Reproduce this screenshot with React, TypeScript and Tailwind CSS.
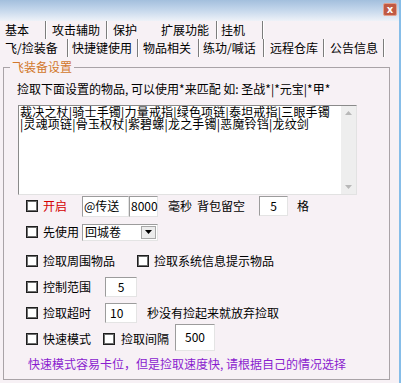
import React from "react";

const Cb = ({ className = "" }: { className?: string }) => (
  <span
    className={`block w-[12px] h-[12px] shrink-0 bg-white border border-[#1e1e1e] shadow-[inset_0_0_0_1px_#6e6e6e] ${className}`}
  />
);

const Sep = () => (
  <span className="block h-full w-[2px] shrink-0 border-l border-[#7c7c7c] border-r border-r-white" />
);

const Tab = ({ w, pl, children }: { w: string; pl: string; children: React.ReactNode }) => (
  <div className={`h-full flex items-center shrink-0 whitespace-nowrap ${w} ${pl}`}>{children}</div>
);

export default function App() {
  return (
    <div className="w-[401px] h-[383px] overflow-hidden bg-[#f7f1f5] border-r-2 border-[#86bde8] text-[12px] leading-[14px] text-black font-['Noto_Sans_CJK_SC','Noto_Sans',sans-serif]">
      {/* title bar */}
      <div className="h-[21px] flex justify-end items-start pr-[2px] bg-gradient-to-b from-[#a3bfdd] via-[#c6d8ec] to-[#eef2f8]">
        <div className="mt-[3px] w-[14px] h-[13px] rounded-[2px] bg-[#c05a44] border border-[#e3a08e] flex items-center justify-center text-white text-[10px] leading-[10px] font-bold font-['DejaVu_Sans',sans-serif]">
          x
        </div>
      </div>

      {/* tab row 1 */}
      <div className="h-[18px] flex items-stretch">
        <Tab w="w-[45px]" pl="pl-[5px]">基本</Tab>
        <Sep />
        <Tab w="w-[59px]" pl="pl-[5px]">攻击辅助</Tab>
        <Sep />
        <Tab w="w-[48px]" pl="pl-[5px]">保护</Tab>
        <Tab w="w-[60px]" pl="pl-[5px]">扩展功能</Tab>
        <Sep />
        <Tab w="w-[44px]" pl="pl-[3px]">挂机</Tab>
        <Sep />
      </div>

      {/* tab row 2 */}
      <div className="h-[18px] flex items-stretch">
        <Tab w="w-[67px]" pl="pl-[5px]">飞/捡装备</Tab>
        <Sep />
        <Tab w="w-[68px]" pl="pl-[3px]">快捷键使用</Tab>
        <Sep />
        <Tab w="w-[59px]" pl="pl-[4px]">物品相关</Tab>
        <Sep />
        <Tab w="w-[63px]" pl="pl-[3px]">练功/喊话</Tab>
        <Sep />
        <Tab w="w-[58px]" pl="pl-[5px]">远程仓库</Tab>
        <Sep />
        <Tab w="w-[58px]" pl="pl-[5px]">公告信息</Tab>
        <Sep />
      </div>

      {/* group box */}
      <fieldset className="mt-[3px] ml-[3px] w-[387px] h-[320px] border border-[#a9a3a7]">
        <legend className="ml-[6px] px-[2px] text-[#d2782c] leading-[14px]">飞装备设置</legend>

        <div className="mt-[8px] pl-[13px] whitespace-nowrap">
          捡取下面设置的物品, 可以使用*来匹配 如: 圣战*|*元宝|*甲*
        </div>

        {/* textarea */}
        <div className="mt-[9px] ml-[14px] w-[339px] h-[90px] flex bg-white border border-[#8a8a8a] border-b-[#e2e2e2] border-r-[#e2e2e2]">
          <div className="flex-1 pl-[1px] leading-[12px] whitespace-nowrap tracking-[0.2px]">
            <div>裁决之杖|骑士手镯|力量戒指|绿色项链|泰坦戒指|三眼手镯</div>
            <div>|灵魂项链|骨玉权杖|紫碧螺|龙之手镯|恶魔铃铛|龙纹剑</div>
          </div>
          <div className="w-[15px] h-full shrink-0 bg-[#eeeeee] flex flex-col justify-between items-center py-[5px]">
            <svg width="7" height="4" viewBox="0 0 7 4">
              <polygon points="0,4 7,4 3.5,0" fill="#b8b8b8" />
            </svg>
            <svg width="7" height="4" viewBox="0 0 7 4">
              <polygon points="0,0 7,0 3.5,4" fill="#b8b8b8" />
            </svg>
          </div>
        </div>

        {/* row 1 */}
        <div className="h-[22px] flex items-center pl-[22px] whitespace-nowrap">
          <Cb />
          <span className="ml-[5px] text-[#d40000]">开启</span>
          <div className="ml-[15px] flex">
            <div className="w-[47px] h-[21px] bg-white border border-[#9c9c9c] border-b-[#e4e4e4] border-r-[#e4e4e4] flex items-center pl-[1px]">
              @传送
            </div>
            <div className="w-[29px] h-[21px] bg-white border border-[#9c9c9c] border-b-[#e4e4e4] border-r-[#e4e4e4] flex items-center pl-[1px]">
              8000
            </div>
          </div>
          <span className="ml-[10px]">毫秒</span>
          <span className="ml-[5px]">背包留空</span>
          <div className="ml-[14px] w-[29px] h-[20px] bg-white border border-[#9c9c9c] border-b-[#e4e4e4] border-r-[#e4e4e4] flex items-center justify-center">
            5
          </div>
          <span className="ml-[9px]">格</span>
        </div>

        {/* row 2 */}
        <div className="mt-[3px] h-[24px] flex items-center pl-[22px] whitespace-nowrap">
          <Cb />
          <span className="ml-[5px]">先使用</span>
          <div className="ml-[3px] w-[76px] h-[17px] bg-white border border-[#9c9c9c] border-b-[#e4e4e4] border-r-[#e4e4e4] flex items-center justify-between">
            <span className="pl-[2px]">回城卷</span>
            <div className="mr-[1px] w-[15px] h-[13px] bg-[#ececec] border border-[#a8a8a8] flex items-center justify-center">
              <svg width="7" height="4" viewBox="0 0 7 4">
                <polygon points="0,0 7,0 3.5,4" fill="#000" />
              </svg>
            </div>
          </div>
        </div>

        {/* row 3 */}
        <div className="mt-[5px] h-[24px] flex items-center pl-[22px] whitespace-nowrap">
          <Cb />
          <span className="ml-[5px]">捡取周围物品</span>
          <Cb className="ml-[22px]" />
          <span className="ml-[5px]">捡取系统信息提示物品</span>
        </div>

        {/* row 4 */}
        <div className="mt-[4px] h-[20px] flex items-center pl-[22px] whitespace-nowrap">
          <Cb />
          <span className="ml-[5px]">控制范围</span>
          <div className="ml-[14px] w-[32px] h-[20px] bg-white border border-[#9c9c9c] border-b-[#e4e4e4] border-r-[#e4e4e4] flex items-center justify-center">
            5
          </div>
        </div>

        {/* row 5 */}
        <div className="mt-[5px] h-[21px] flex items-center pl-[22px] whitespace-nowrap">
          <Cb />
          <span className="ml-[5px]">捡取超时</span>
          <div className="ml-[14px] w-[32px] h-[20px] bg-white border border-[#9c9c9c] border-b-[#e4e4e4] border-r-[#e4e4e4] flex items-center pl-[4px]">
            10
          </div>
          <span className="ml-[10px]">秒没有捡起来就放弃捡取</span>
        </div>

        {/* row 6 */}
        <div className="h-[28px] flex items-center pl-[22px] whitespace-nowrap">
          <Cb className="mt-[3px]" />
          <span className="ml-[5px] mt-[3px]">快速模式</span>
          <Cb className="ml-[12px] mt-[3px]" />
          <span className="ml-[6px] mt-[3px]">捡取间隔</span>
          <div className="ml-[6px] w-[40px] h-[27px] bg-white border border-[#9c9c9c] border-b-[#e4e4e4] border-r-[#e4e4e4] flex items-center justify-center">
            500
          </div>
        </div>

        {/* hint */}
        <div className="mt-[6px] pl-[24px] text-[#8a1ccf] whitespace-nowrap">
          快速模式容易卡位，但是捡取速度快, 请根据自己的情况选择
        </div>
      </fieldset>
    </div>
  );
}
